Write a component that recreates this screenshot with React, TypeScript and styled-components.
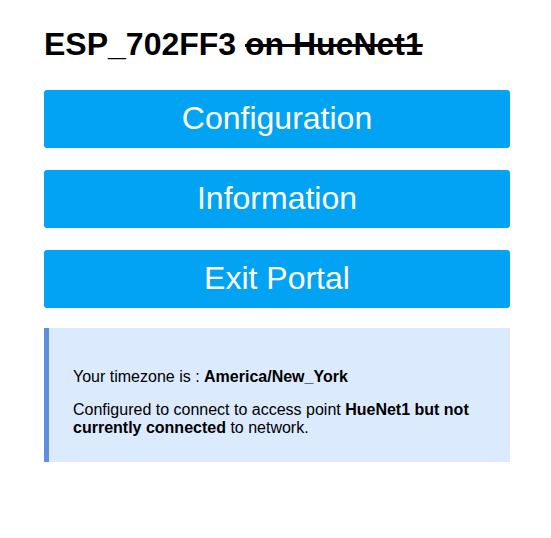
import { FC } from 'react'
import styled, { createGlobalStyle } from 'styled-components'

const GlobalStyle = createGlobalStyle`
	html, body {
		margin: 0;
		padding: 0;
		background: #fff;
	}
	body {
		font-family: 'Liberation Sans', Arial, sans-serif;
		color: #000;
	}
`

const Wrap = styled.div`
	width: 466px;
	padding: 26px 0 40px 44px;
	display: flex;
	flex-direction: column;
`

const Title = styled.h1`
	margin: 0 0 27px;
	font-size: 32px;
	font-weight: bold;
	line-height: 37px;
	white-space: nowrap;

	s {
		text-decoration-thickness: 3px;
	}
`

const Menu = styled.div`
	display: flex;
	flex-direction: column;
	gap: 22px;
`

const Button = styled.button`
	width: 100%;
	height: 58px;
	border: 0;
	border-radius: 3px;
	background: #03a3f3;
	color: #fff;
	font-family: 'Liberation Sans', Arial, sans-serif;
	font-size: 32px;
	line-height: 56px;
	padding: 0 0 2px;
	cursor: pointer;
`

const Message = styled.div`
	margin-top: 20px;
	background: #dbeafd;
	border-left: 5px solid #5c8ee2;
	padding: 40px 24px 25px 24px;
	display: flex;
	flex-direction: column;
	gap: 15px;
	font-size: 16px;
	line-height: 18px;

	p {
		margin: 0;
	}
`

const App: FC = () => {
	return (
		<>
			<GlobalStyle />
			<Wrap>
				<Title>
					ESP_702FF3 <s>on HueNet1</s>
				</Title>
				<Menu>
					<Button>Configuration</Button>
					<Button>Information</Button>
					<Button>Exit Portal</Button>
				</Menu>
				<Message>
					<p>
						Your timezone is : <b>America/New_York</b>
					</p>
					<p>
						Configured to connect to access point{' '}
						<b>HueNet1 but not currently connected</b> to network.
					</p>
				</Message>
			</Wrap>
		</>
	)
}

export default App
